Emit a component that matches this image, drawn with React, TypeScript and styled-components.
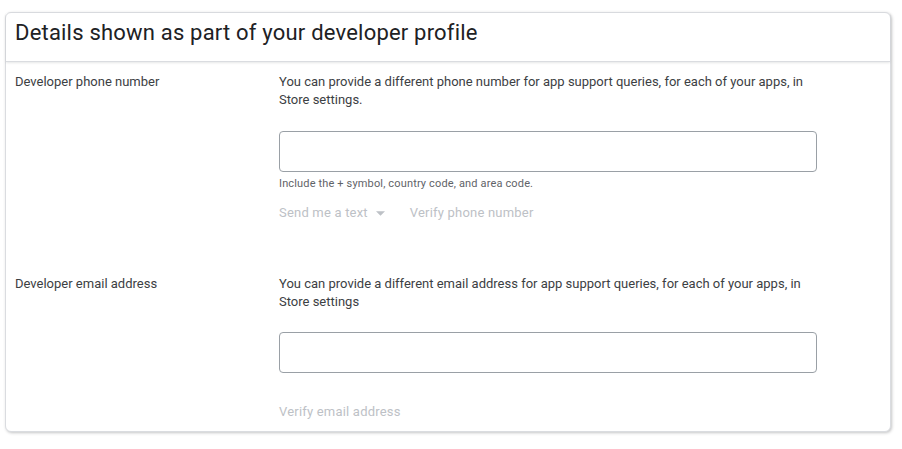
import styled, { createGlobalStyle } from 'styled-components';

const GlobalStyle = createGlobalStyle`
  html, body {
    margin: 0;
    padding: 0;
    background: #ffffff;
    font-family: Roboto, "Liberation Sans", Arial, sans-serif;
  }
`;

interface FieldProps {
  label: string;
  description: React.ReactNode;
  helper?: string;
  actions: React.ReactNode;
  last?: boolean;
}

function Field({ label, description, helper, actions, last }: FieldProps) {
  return (
    <Row $last={last}>
      <Label>{label}</Label>
      <Control>
        <Description>{description}</Description>
        <TextInput type="text" $hasHelper={!!helper} />
        {helper && <Helper>{helper}</Helper>}
        <Actions $hasHelper={!!helper}>{actions}</Actions>
      </Control>
    </Row>
  );
}

export default function App() {
  return (
    <>
      <GlobalStyle />
      <Page>
        <Card>
          <Header>
            <Title>Details shown as part of your developer profile</Title>
          </Header>
          <Field
            label="Developer phone number"
            description={
              <>
                You can provide a different phone number for app support queries, for each of your apps, in
                <br />
                Store settings.
              </>
            }
            helper="Include the + symbol, country code, and area code."
            actions={
              <>
                <ActionLink>
                  Send me a text
                  <Caret viewBox="0 0 10 5" aria-hidden>
                    <path d="M0 0 L10 0 L5 5 Z" />
                  </Caret>
                </ActionLink>
                <ActionLink>Verify phone number</ActionLink>
              </>
            }
          />
          <Field
            label="Developer email address"
            description={
              <>
                You can provide a different email address for app support queries, for each of your apps, in
                <br />
                Store settings
              </>
            }
            actions={<ActionLink>Verify email address</ActionLink>}
            last
          />
        </Card>
      </Page>
    </>
  );
}

const Page = styled.div`
  padding: 12px 10px 17px 5px;
`;

const Card = styled.div`
  width: 886px;
  box-sizing: border-box;
  background: #ffffff;
  border: 1px solid #dadce0;
  border-radius: 6px;
  box-shadow: 1px 1px 3px rgba(60, 64, 67, 0.3);
`;

const Header = styled.div`
  padding: 6px 9px 14px;
  border-bottom: 1px solid #dadce0;
  box-shadow: 0 1px 2px rgba(60, 64, 67, 0.12);
`;

const Title = styled.h2`
  margin: 0;
  font-size: 22px;
  line-height: 28px;
  letter-spacing: 0.2px;
  font-weight: 400;
  color: #202124;
`;

const Row = styled.div<{ $last?: boolean }>`
  display: grid;
  grid-template-columns: 264px 538px;
  padding: 11px 9px ${({ $last }) => ($last ? '10px' : '42px')};
`;

const Label = styled.div`
  font-size: 13px;
  line-height: 18px;
  color: #3c4043;
`;

const Control = styled.div`
  display: flex;
  flex-direction: column;
`;

const Description = styled.p`
  margin: 0;
  font-size: 13px;
  line-height: 18px;
  color: #3c4043;
`;

const TextInput = styled.input<{ $hasHelper?: boolean }>`
  margin-top: ${({ $hasHelper }) => ($hasHelper ? '22px' : '21px')};
  width: 538px;
  height: 41px;
  box-sizing: border-box;
  border: 1px solid #9aa0a6;
  border-radius: 4px;
  background: #ffffff;
  outline: none;
  padding: 0 12px;
  font-family: inherit;
  font-size: 13px;
`;

const Helper = styled.div`
  margin-top: 5px;
  font-size: 11px;
  line-height: 14px;
  letter-spacing: 0.15px;
  color: #5f6368;
`;

const Actions = styled.div<{ $hasHelper?: boolean }>`
  display: flex;
  align-items: center;
  gap: 25px;
  margin-top: ${({ $hasHelper }) => ($hasHelper ? '13px' : '30px')};
`;

const ActionLink = styled.span`
  display: inline-flex;
  align-items: center;
  gap: 8px;
  font-size: 13px;
  line-height: 18px;
  letter-spacing: 0.2px;
  color: #bdc1c6;
`;

const Caret = styled.svg`
  width: 9px;
  height: 5px;
  fill: #bdc1c6;
`;
